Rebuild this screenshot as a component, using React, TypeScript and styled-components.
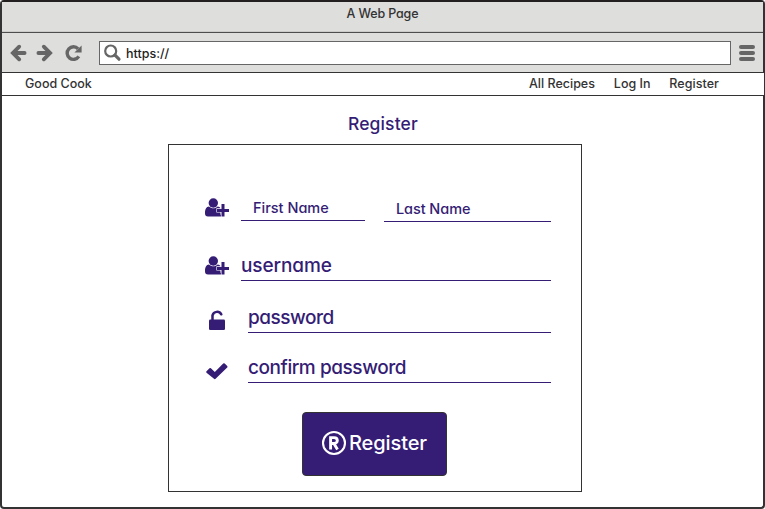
import React from "react";
import styled, { createGlobalStyle } from "styled-components";

const purple = "#351d75";
const ink = "#333333";

const GlobalStyle = createGlobalStyle`
  * { box-sizing: border-box; }
  body { margin: 0; background: #fff; }
  svg { display: block; flex: none; }
`;

const Frame = styled.div`
  display: flex;
  flex-direction: column;
  width: 765px;
  height: 509px;
  border: 2px solid ${ink};
  border-top-color: #231f20;
  border-radius: 4px;
  background: #fff;
  font-family: Inter, "Noto Sans", sans-serif;
  font-feature-settings: "cv11" 1;
  font-weight: 500;
  color: ${ink};
`;

const Label = styled.span<{ $size?: number; $spacing?: number }>`
  display: block;
  white-space: nowrap;
  font-size: ${(p) => p.$size ?? 12.5}px;
  line-height: 1.2;
  letter-spacing: ${(p) => p.$spacing ?? 0}px;
`;

const TitleBar = styled.header`
  display: flex;
  justify-content: center;
  height: 31px;
  padding-top: 4px;
  background: #dededd;
  border-bottom: 1px solid #4d4d4d;
  box-shadow: inset 0 -1px #cbcbc9;
`;

const Toolbar = styled.div`
  display: flex;
  align-items: center;
  height: 39px;
  padding: 1px 8px 0 8px;
  background: #dededd;
`;

const NavIcons = styled.div`
  display: flex;
  align-items: center;
  gap: 9px;
  width: 89px;
  color: #666;
`;

const AddressBar = styled.div`
  display: flex;
  align-items: center;
  width: 632px;
  height: 24px;
  padding-left: 4px;
  gap: 4px;
  border: 1px solid #666;
  background: #fff;
  color: #222;
`;

const MenuIcon = styled.div`
  display: grid;
  gap: 2px;
  margin-left: 8px;
`;

const MenuBar = styled.i`
  width: 16px;
  height: 4px;
  border-radius: 2px;
  background: #666;
`;

const SiteNav = styled.nav`
  display: flex;
  align-items: center;
  height: 24px;
  margin: 0 -2px 0 -1px;
  padding: 0 45px 1px 23px;
  border: 1px solid ${ink};
  background: #fff;
`;

const Links = styled.div`
  display: flex;
  justify-content: space-between;
  width: 190px;
  margin-left: auto;
`;

const Page = styled.main`
  display: flex;
  flex-direction: column;
  color: ${purple};
`;

const Heading = styled.h1`
  display: flex;
  height: 48px;
  margin: 0;
  padding: 17px 0 0 346px;
  font-weight: inherit;
`;

const Form = styled.section`
  width: 414px;
  height: 348px;
  margin-left: 166px;
  padding: 47px 30px 0 36px;
  border: 1px solid ${ink};
`;

const Row = styled.div<{ $height: number }>`
  display: flex;
  height: ${(p) => p.$height}px;
`;

const IconCell = styled.div<{ $width?: number; $top: number; $left?: number }>`
  width: ${(p) => p.$width ?? 36}px;
  flex: none;
  padding: ${(p) => p.$top}px 0 0 ${(p) => p.$left ?? 0}px;
`;

const Field = styled.div<{ $width: number; $height: number; $pad?: number; $bottom?: number }>`
  display: flex;
  align-items: flex-end;
  width: ${(p) => p.$width}px;
  height: ${(p) => p.$height}px;
  padding: 0 0 ${(p) => p.$bottom ?? 2}px ${(p) => p.$pad ?? 0}px;
  border-bottom: 1px solid ${purple};
`;

const Gap = styled.span`
  width: 19px;
`;

const Submit = styled.button`
  display: flex;
  align-items: center;
  gap: 2px;
  width: 145px;
  height: 64px;
  margin-left: 97px;
  padding: 0 0 2px 18px;
  border: 1px solid ${ink};
  border-radius: 4px;
  background: ${purple};
  color: #fff;
  font: inherit;
  font-feature-settings: inherit;
`;

const Arrow = ({ flip = false }: { flip?: boolean }) => (
  <svg width="17" height="18" viewBox="0 0 17 18" fill="none" stroke="currentColor" strokeWidth="3.8">
    <g transform={flip ? "translate(17 0) scale(-1 1)" : undefined}>
      <path d="M3.5 9H14.6" strokeLinecap="round" />
      <path d="M9.2 2.7L2.9 9L9.2 15.3" strokeLinecap="round" />
    </g>
  </svg>
);

const Reload = () => (
  <svg width="21" height="18" viewBox="-3 0 21 18">
    <path d="M13.8 12.4A6.3 6.3 0 1 1 13.1 4.8" fill="none" stroke="currentColor" strokeWidth="3.4" />
    <path d="M16.6 1.4V8.4H9.4Z" fill="currentColor" />
  </svg>
);

const Search = () => (
  <svg width="18" height="18" viewBox="0 0 18 18" fill="none" stroke="#666">
    <circle cx="6.7" cy="7" r="5.5" strokeWidth="2.2" />
    <path d="M11 11.2L15 15.2" strokeWidth="3.2" strokeLinecap="round" />
  </svg>
);

const UserPlus = () => (
  <svg width="24" height="20" viewBox="0 0 24 20" fill={purple}>
    <circle cx="8.3" cy="5" r="4.7" />
    <path d="M4 8.5C6.5 10.9 10.2 10.9 12.7 8.5C14 8.7 14.8 9.3 15.5 10.3V16.7H17V18.4H3Q0 18.4 0 15.2C0 11.5 1.2 8.7 4 8.5Z" />
    <path d="M16.5 6.1H19.5V10.9H24V13.9H19.5V18.6H16.5V13.9H12V10.9H16.5Z" stroke="#fff" strokeWidth="1.2" paintOrder="stroke" />
  </svg>
);

const Unlock = () => (
  <svg width="17" height="22" viewBox="0 0 17 22">
    <path d="M3.5 12V6.3A4.8 4.8 0 0 1 12.3 5.3" fill="none" stroke={purple} strokeWidth="2.5" strokeLinecap="round" />
    <rect y="10.5" width="16" height="10.5" rx="1.3" fill={purple} />
  </svg>
);

const Check = () => (
  <svg width="22" height="18" viewBox="0 0 22 18">
    <path d="M0.5 9.3L3.5 6.2Q4.2 5.6 4.9 6.2L8.8 10L17.2 1.6Q18 1 18.7 1.6L21.2 4.1Q21.9 4.9 21.2 5.6L9.6 16.8Q8.8 17.5 8 16.8L0.5 10.7Q-.1 10 .5 9.3Z" fill={purple} />
  </svg>
);

const Registered = () => (
  <svg width="26" height="26" viewBox="0 0 26 26" fill="none" stroke="#fff">
    <circle cx="13" cy="13" r="11" strokeWidth="2.1" />
    <path d="M9.6 19.5V7.6H13C17.4 7.6 17.4 13.5 13 13.5H9.6M12.9 13.5L16.5 19.5" strokeWidth="2.9" />
  </svg>
);

export default function App() {
  return (
    <>
      <GlobalStyle />
      <Frame>
        <TitleBar><Label $spacing={-0.15}>A Web Page</Label></TitleBar>
        <Toolbar>
          <NavIcons><Arrow /><Arrow flip /><Reload /></NavIcons>
          <AddressBar><Search /><Label>https://</Label></AddressBar>
          <MenuIcon><MenuBar /><MenuBar /><MenuBar /></MenuIcon>
        </Toolbar>
        <SiteNav>
          <Label>Good Cook</Label>
          <Links><Label>All Recipes</Label><Label>Log In</Label><Label $spacing={0.06}>Register</Label></Links>
        </SiteNav>
        <Page>
          <Heading><Label $size={17.5} $spacing={0.12}>Register</Label></Heading>
          <Form>
            <Row $height={50}>
              <IconCell $top={6}><UserPlus /></IconCell>
              <Field $width={124} $height={29} $pad={12} $bottom={4}><Label $size={14.5}>First Name</Label></Field>
              <Gap />
              <Field $width={167} $height={30} $pad={12} $bottom={4}><Label $size={14.5} $spacing={-0.08}>Last Name</Label></Field>
            </Row>
            <Row $height={56}>
              <IconCell $top={14}><UserPlus /></IconCell>
              <Field $width={310} $height={39}><Label $size={19} $spacing={-0.1}>username</Label></Field>
            </Row>
            <Row $height={50}>
              <IconCell $top={11} $width={43} $left={4}><Unlock /></IconCell>
              <Field $width={303} $height={35}><Label $size={19} $spacing={-0.48}>password</Label></Field>
            </Row>
            <Row $height={64}>
              <IconCell $top={14} $width={43} $left={1}><Check /></IconCell>
              <Field $width={303} $height={35}><Label $size={19} $spacing={-0.44}>confirm password</Label></Field>
            </Row>
            <Submit><Registered /><Label $size={20} $spacing={-0.1}>Register</Label></Submit>
          </Form>
        </Page>
      </Frame>
    </>
  );
}
